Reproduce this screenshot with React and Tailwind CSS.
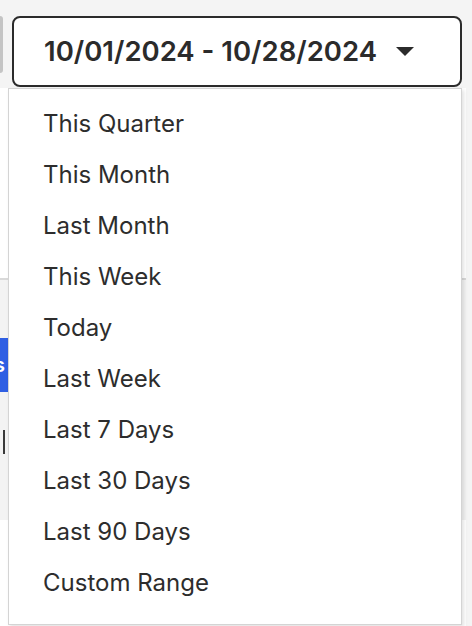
import React from 'react';

const ranges = [
  'This Quarter',
  'This Month',
  'Last Month',
  'This Week',
  'Today',
  'Last Week',
  'Last 7 Days',
  'Last 30 Days',
  'Last 90 Days',
  'Custom Range',
];

const App = () => {
  return (
    <div
      className="relative w-[472px] h-[626px] overflow-hidden bg-[#f4f4f4] text-[#2b2b2b]"
      style={{ fontFamily: 'Inter, "Noto Sans", sans-serif' }}
    >
      {/* page underneath */}
      <div className="flex flex-col">
        <div className="flex items-start h-[88px] pt-[16px]">
          <div className="w-[3px] h-[57px] bg-[#c4c4c4] rounded-r-sm" />
          <button className="ml-[9px] w-[450px] h-[71px] flex items-center pl-[30px] pr-[46px] bg-white border-2 border-[#2b2b2b] rounded-[8px]">
            <span className="text-[27.5px] font-semibold text-[#2b2b2b]">
              10/01/2024 - 10/28/2024
            </span>
            <svg className="ml-auto" width="18" height="9" viewBox="0 0 18 9">
              <path d="M0 0 L18 0 L9 9 Z" fill="#2b2b2b" />
            </svg>
          </button>
        </div>
        <div className="flex">
          <div className="w-[466px] h-[190px] bg-white" />
        </div>
        <div className="h-[242px] w-[466px] bg-[#f3f3f3] border-t-2 border-[#d9d9d9] flex flex-col">
          <div className="mt-[58px] h-[54px] w-[8px] bg-[#2f5fe3] flex items-center overflow-hidden">
            <span className="text-white font-semibold text-[20px] -ml-[6px]">s</span>
          </div>
          <div className="mt-[38px] ml-[3px] w-[2px] h-[24px] bg-[#3a3a3a]" />
        </div>
        <div className="w-[466px] h-[120px] bg-white flex gap-[40px] pl-[30px] pt-[110px]">
          <div className="w-[220px] h-[3px] bg-[#d4d4d4]" />
          <div className="w-[117px] h-[3px] bg-[#d4d4d4]" />
        </div>
      </div>

      {/* dropdown menu */}
      <div className="absolute left-[8px] top-[88px] w-[454px] h-[537px] bg-white border border-[#d4d4d4] shadow-[2px_2px_4px_rgba(0,0,0,0.12)] pt-[9px]">
        {ranges.map(r => (
          <div key={r} className="h-[51px] flex items-center pl-[34px] text-[24px] text-[#2d2d2d]">
            {r}
          </div>
        ))}
      </div>
    </div>
  );
};

export default App;
